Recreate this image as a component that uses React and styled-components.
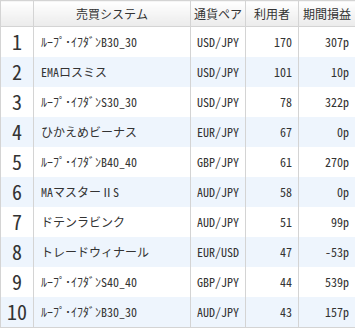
import React from "react";
import styled, { createGlobalStyle } from "styled-components";

const Global = createGlobalStyle`
  html, body { margin: 0; padding: 0; background: #fff; }
  body { font-family: "Noto Sans Mono CJK JP", "Noto Sans CJK JP", "Noto Sans", monospace; color: #333; }
`;

const Table = styled.table`
  width: 355px;
  border-collapse: collapse;
  table-layout: fixed;
  border: 1px solid #d4d4d4;
`;

const Col = styled.col`
  width: ${(p) => p.$w}px;
`;

const HeadCell = styled.th`
  height: 25px;
  padding: 0;
  font-size: 12px;
  font-weight: normal;
  color: #333;
  text-align: center;
  background: linear-gradient(#ffffff, #ebebeb);
  border: 1px solid #d4d4d4;
  border-top: none;
  white-space: nowrap;
`;

const Row = styled.tr`
  background: ${(p) => (p.$alt ? "#eef5fd" : "#ffffff")};
`;

const Cell = styled.td`
  height: 30px;
  padding: 0 ${(p) => (p.$align === "right" ? "6px" : "0")} 0 ${(p) => (p.$align === "left" ? "7px" : "0")};
  font-size: 12px;
  line-height: 1;
  text-align: ${(p) => p.$align || "center"};
  border-left: 1px solid #d4d4d4;
  border-right: 1px solid #d4d4d4;
  white-space: nowrap;
  overflow: hidden;
`;

const RankCell = styled(Cell)`
  font-size: 20px;
  font-weight: 500;
  text-align: center;
  color: #333;
`;

const rows = [
  ["ﾙｰﾌﾟ･ｲﾌﾀﾞﾝB30_30", "USD/JPY", 170, "307p"],
  ["EMAロスミス", "USD/JPY", 101, "10p"],
  ["ﾙｰﾌﾟ･ｲﾌﾀﾞﾝS30_30", "USD/JPY", 78, "322p"],
  ["ひかえめビーナス", "EUR/JPY", 67, "0p"],
  ["ﾙｰﾌﾟ･ｲﾌﾀﾞﾝB40_40", "GBP/JPY", 61, "270p"],
  ["MAマスターⅡS", "AUD/JPY", 58, "0p"],
  ["ドテンラビンク", "AUD/JPY", 51, "99p"],
  ["トレードウィナール", "EUR/USD", 47, "-53p"],
  ["ﾙｰﾌﾟ･ｲﾌﾀﾞﾝS40_40", "GBP/JPY", 44, "539p"],
  ["ﾙｰﾌﾟ･ｲﾌﾀﾞﾝB30_30", "AUD/JPY", 43, "157p"],
];

export default function App() {
  return (
    <>
      <Global />
      <Table>
        <colgroup>
          <Col $w={33} />
          <Col $w={157} />
          <Col $w={55} />
          <Col $w={53} />
          <Col $w={57} />
        </colgroup>
        <thead>
          <tr>
            <HeadCell />
            <HeadCell>売買システム</HeadCell>
            <HeadCell>通貨ペア</HeadCell>
            <HeadCell>利用者</HeadCell>
            <HeadCell>期間損益</HeadCell>
          </tr>
        </thead>
        <tbody>
          {rows.map((r, i) => (
            <Row key={i} $alt={i % 2 === 1}>
              <RankCell>{i + 1}</RankCell>
              <Cell $align="left">{r[0]}</Cell>
              <Cell>{r[1]}</Cell>
              <Cell $align="right">{r[2]}</Cell>
              <Cell $align="right">{r[3]}</Cell>
            </Row>
          ))}
        </tbody>
      </Table>
    </>
  );
}
